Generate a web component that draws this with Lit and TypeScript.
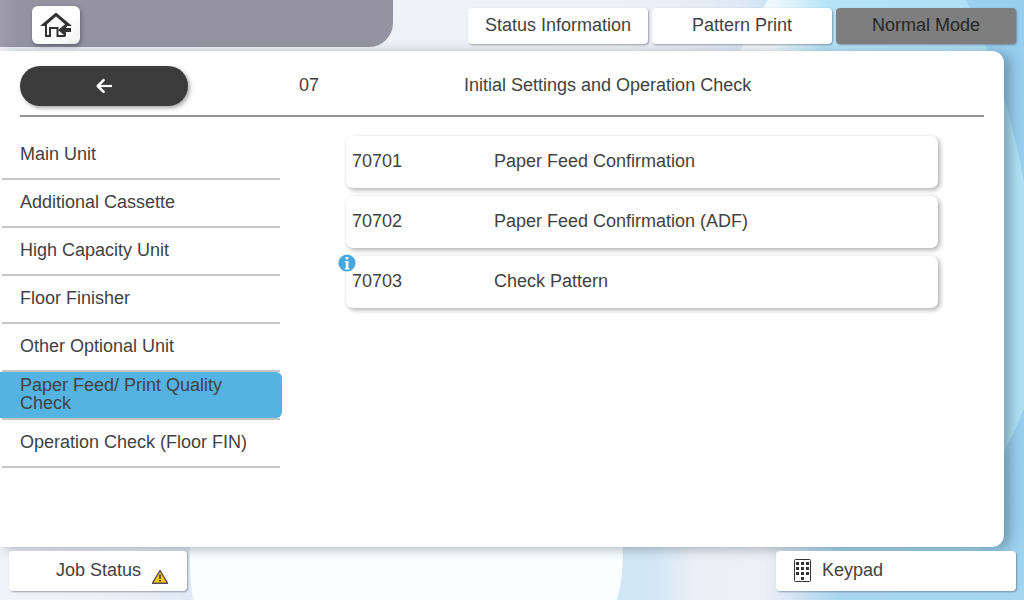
import { LitElement, html, css, svg } from "lit";
import { customElement, property, state } from "lit/decorators.js";
import { classMap } from "lit/directives/class-map.js";

interface CheckItem {
  code: string;
  label: string;
  info?: boolean;
}

const SECTIONS = [
  "Main Unit",
  "Additional Cassette",
  "High Capacity Unit",
  "Floor Finisher",
  "Other Optional Unit",
  "Paper Feed/ Print Quality Check",
  "Operation Check (Floor FIN)",
];

const ITEMS: CheckItem[] = [
  { code: "70701", label: "Paper Feed Confirmation" },
  { code: "70702", label: "Paper Feed Confirmation (ADF)" },
  { code: "70703", label: "Check Pattern", info: true },
];

/* Soft blue wallpaper with overlapping discs. */
@customElement("app-wallpaper")
class AppWallpaper extends LitElement {
  static styles = css`
    :host {
      display: block;
    }
    .art {
      display: block;
      width: 100%;
      height: 100%;
    }
  `;
  render() {
    return html`<svg class="art" viewBox="0 0 1024 600" preserveAspectRatio="none" aria-hidden="true">
      <defs>
        <linearGradient id="top" x1="0" x2="1" y1="0" y2="0">
          <stop offset="0" stop-color="#f0f0f8" />
          <stop offset="0.6" stop-color="#f0f0f7" />
          <stop offset="0.72" stop-color="#dfe9f4" />
          <stop offset="0.82" stop-color="#a4d8f0" />
          <stop offset="1" stop-color="#98cdee" />
        </linearGradient>
        <linearGradient id="bottom" x1="0" x2="1" y1="0" y2="0">
          <stop offset="0" stop-color="#f2f2f9" />
          <stop offset="0.1" stop-color="#eeeff7" />
          <stop offset="0.19" stop-color="#dfeaf6" />
          <stop offset="0.6" stop-color="#cfe6f6" />
          <stop offset="0.64" stop-color="#d3e7f6" />
          <stop offset="0.68" stop-color="#eceff6" />
          <stop offset="0.745" stop-color="#efeff7" />
          <stop offset="0.82" stop-color="#a8d6f0" />
          <stop offset="1" stop-color="#a4d6f0" />
        </linearGradient>
        <linearGradient id="disc" x1="740" x2="1030" y1="0" y2="0" gradientUnits="userSpaceOnUse">
          <stop offset="0" stop-color="#f3f8fb" />
          <stop offset="0.12" stop-color="#eff8fb" />
          <stop offset="0.3" stop-color="#b4e3f8" />
          <stop offset="1" stop-color="#aee0f4" />
        </linearGradient>
        <linearGradient id="side" x1="0" x2="0" y1="0" y2="1">
          <stop offset="0" stop-color="#98cdee" />
          <stop offset="0.85" stop-color="#9acfee" />
          <stop offset="1" stop-color="#a4d6f0" />
        </linearGradient>
      </defs>
      <rect width="1024" height="300" fill="url(#top)" />
      <rect y="300" width="1024" height="300" fill="url(#bottom)" />
      <rect x="980" y="60" width="44" height="540" fill="url(#side)" />
      <path d="M735 62 Q750 28 768 0 H966 Q1008 90 1024 182 V408 Q1016 430 1004 452 L980 490 H735Z" fill="url(#disc)" />
      <path d="M190 540 Q189 575 193 600 H617 Q625 570 622 540Z" fill="#fafeff" />
    </svg>`;
  }
}

/* Selectable row of the left-hand navigation. */
@customElement("section-link")
class SectionLink extends LitElement {
  @property() label = "";
  @property({ type: Boolean }) selected = false;

  static styles = css`
    :host {
      display: block;
    }
    .row {
      display: flex;
      align-items: center;
      box-sizing: border-box;
      width: 100%;
      min-height: 46px;
      margin: 0;
      padding: 0 20px 2px;
      border: 0;
      border-radius: 0 6px 6px 0;
      background: none;
      color: inherit;
      font: inherit;
      font-kerning: none;
      line-height: 18px;
      text-align: left;
    }
    .row.selected {
      padding-right: 52px;
      background: #55b3e2;
    }
    .line {
      height: 2px;
      margin: 0 2px;
      background: #c6c6c6;
    }
  `;
  render() {
    return html`<button
        class=${classMap({ row: true, selected: this.selected })}
        aria-pressed=${this.selected ? "true" : "false"}
      >
        ${this.label}
      </button>
      <div class="line"></div>`;
  }
}

@customElement("app-root")
class AppRoot extends LitElement {
  @state() private selected = 5;

  static styles = css`
    :host {
      display: grid;
      grid-template-rows: 51px 1fr 53px;
      position: relative;
      min-height: 100vh;
      overflow: hidden;
      font-family: "Liberation Sans", Arial, sans-serif;
      font-size: 18px;
      font-kerning: none;
      line-height: 20px;
      color: #424242;
    }
    button {
      border: 0;
      margin: 0;
      padding: 0;
      font: inherit;
      font-kerning: none;
      color: inherit;
      background: #fff;
    }
    .wallpaper {
      position: absolute;
      inset: 0;
      z-index: -1;
    }
    .top {
      display: flex;
      justify-content: space-between;
      align-items: flex-start;
    }
    .tab {
      box-sizing: border-box;
      flex: 0 1 393px;
      height: 47px;
      padding: 6px 32px;
      border-radius: 0 0 24px 0;
      background: linear-gradient(90deg, #a09eac, #9593a1 16px);
    }
    .home {
      display: grid;
      place-items: center;
      width: 48px;
      height: 38px;
      border-radius: 6px;
      background: linear-gradient(135deg, #fff 60%, #f0f0f2);
      box-shadow: 1px 2px 4px rgba(40, 40, 60, 0.45);
    }
    .modes {
      display: flex;
      gap: 4px;
      padding: 8px 8px 0 0;
    }
    .mode {
      width: 180px;
      height: 36px;
      padding-bottom: 2px;
      border-radius: 4px;
      box-shadow: 1px 1px 2px rgba(60, 60, 80, 0.45);
    }
    .mode.current {
      background: #7e7e7e;
      color: #262626;
    }
    .panel {
      display: flex;
      flex-direction: column;
      margin-right: 20px;
      border-radius: 0 12px 12px 0;
      background: #fff;
      box-shadow: 6px 2px 12px rgba(30, 50, 60, 0.35);
    }
    .title-bar {
      display: grid;
      grid-template-columns: 279px 165px 1fr;
      align-items: center;
      margin: 0 20px;
      padding: 15px 0 9px;
      border-bottom: 2px solid #949494;
    }
    .heading {
      margin: 0;
      padding-bottom: 2px;
      font-size: 18px;
      font-weight: 400;
    }
    .back {
      display: grid;
      place-items: center;
      width: 168px;
      height: 40px;
      border-radius: 20px;
      background: #3b3b3b;
      box-shadow: 2px 2px 4px rgba(0, 0, 0, 0.35);
    }
    .body {
      display: grid;
      grid-template-columns: 282px 1fr;
      flex: 1;
    }
    .sections {
      padding-top: 15px;
    }
    .checks {
      display: flex;
      flex-direction: column;
      gap: 8px;
      margin: 0;
      padding: 19px 66px 20px 64px;
      list-style: none;
    }
    .check {
      position: relative;
    }
    .card {
      display: grid;
      grid-template-columns: 142px 1fr;
      align-items: center;
      width: 100%;
      height: 52px;
      padding: 0 6px 2px;
      border-radius: 7px;
      text-align: left;
      box-shadow: 2px 2px 5px rgba(0, 0, 0, 0.32);
    }
    .info {
      position: absolute;
      top: -2px;
      left: -8px;
    }
    .bottom {
      display: flex;
      justify-content: space-between;
      align-items: flex-start;
      padding: 4px 8px 0 9px;
    }
    .job,
    .keypad {
      display: flex;
      align-items: center;
      height: 40px;
      border-radius: 4px;
      box-shadow: 1px 1px 2px rgba(60, 60, 80, 0.45);
    }
    .job {
      gap: 10px;
      width: 178px;
      padding-left: 47px;
    }
    .keypad {
      gap: 11px;
      width: 240px;
      padding-left: 18px;
    }
    .caption {
      padding-bottom: 2px;
    }
    .warn {
      align-self: flex-end;
      margin-bottom: 6px;
    }
    svg {
      display: block;
    }
  `;

  private keyDots() {
    const dots = [];
    for (let row = 0; row < 3; row++) {
      for (let col = 0; col < 3; col++) {
        dots.push(svg`<rect x=${2 + col * 5} y=${3 + row * 5} width="3" height="3" />`);
      }
    }
    dots.push(svg`<rect x="7" y="18" width="3" height="3" />`);
    return dots;
  }

  render() {
    return html`
      <app-wallpaper class="wallpaper"></app-wallpaper>
      <header class="top">
        <div class="tab">
          <button class="home" aria-label="Home">
            <svg width="32" height="26" viewBox="0 0 32 26" fill="#333">
              <path d="M16 0.5 L32 14 H27 L16 4.4 L5 14 H0 Z" />
              <path d="M5 12 H7 V23 H9 V15 H18.5 V23 H25 V25 H16.5 V17 H11 V25 H5 Z" />
              <path d="M25 10.5 H27 V15 H25 Z" />
              <path d="M18 18 L26 11.5 V16 H31 V20 H26 V24.8 Z" />
            </svg>
          </button>
        </div>
        <nav class="modes">
          <button class="mode">Status Information</button>
          <button class="mode">Pattern Print</button>
          <button class="mode current">Normal Mode</button>
        </nav>
      </header>

      <main class="panel">
        <div class="title-bar">
          <button class="back" aria-label="Back">
            <svg width="18" height="16" viewBox="0 0 18 16" fill="none" stroke="#fff" stroke-width="2.6">
              <path d="M17 8 H3" stroke-width="2.2" />
              <path d="M8.6 2.2 L2.8 8 L8.6 13.8" stroke-linecap="round" stroke-linejoin="round" />
            </svg>
          </button>
          <div class="heading">07</div>
          <h1 class="heading">Initial Settings and Operation Check</h1>
        </div>
        <div class="body">
          <nav class="sections">
            ${SECTIONS.map(
              (label, i) => html`<section-link
                .label=${label}
                .selected=${i === this.selected}
                @click=${() => (this.selected = i)}
              ></section-link>`
            )}
          </nav>
          <ul class="checks">
            ${ITEMS.map(
              (item) => html`<li class="check">
                <button class="card"><span>${item.code}</span><span>${item.label}</span></button>
                ${item.info
                  ? html`<svg class="info" width="18" height="18" viewBox="0 0 18 18" aria-hidden="true">
                      <circle cx="9" cy="9" r="8.6" fill="#48a7de" />
                      <path d="M7.6 3 H10.4 V5.5 H7.6 Z M6.8 7 H10.4 V14.2 H11.4 V15.4 H6.8 V14.2 H7.8 V8.2 H6.8 Z" fill="#fff" />
                    </svg>`
                  : null}
              </li>`
            )}
          </ul>
        </div>
      </main>

      <footer class="bottom">
        <button class="job">
          <span class="caption">Job Status</span>
          <svg class="warn" width="18" height="16" viewBox="0 0 18 16" aria-hidden="true">
            <path d="M9 1.5 L16.5 14.2 H1.5 Z" fill="#fbc80c" stroke="#54504c" stroke-width="1.4" stroke-linejoin="round" />
            <path d="M8.1 5.4 H9.9 L9.6 10 H8.4 Z M8.1 11 H9.9 V12.6 H8.1 Z" fill="#333" />
          </svg>
        </button>
        <button class="keypad">
          <svg width="17" height="24" viewBox="0 0 17 24" fill="#333" aria-hidden="true">
            <rect x="0.5" y="0.5" width="16" height="22" rx="1" fill="none" stroke="#333" />
            ${this.keyDots()}
          </svg>
          <span class="caption">Keypad</span>
        </button>
      </footer>
    `;
  }
}
